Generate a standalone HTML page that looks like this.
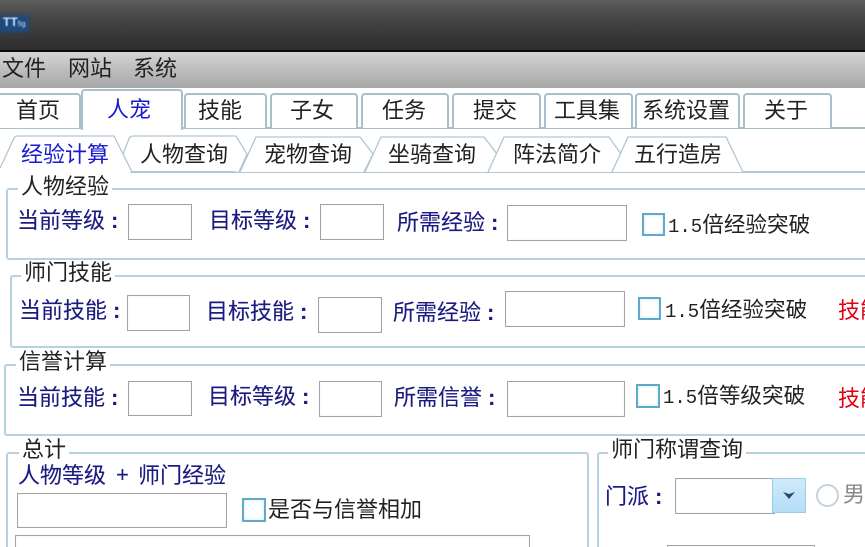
<!DOCTYPE html>
<html style="width:865px;height:547px;overflow:hidden"><head><meta charset="utf-8"><style>
html,body{margin:0;padding:0}
body{width:865px;height:547px;overflow:hidden;background:#fff;position:relative;font-family:"Liberation Sans","WenQuanYi Zen Hei","Noto Sans CJK SC",sans-serif;}
#p{left:0;top:0;width:865px;height:547px;overflow:hidden;background:#fff;filter:blur(.35px)}
div,span{position:absolute;box-sizing:border-box}
.t{font-size:22px;line-height:24px;white-space:nowrap;color:#222}
.t span{position:static}
.b{color:#1a1a80;-webkit-text-stroke:.12px #1a1a80}
.r{color:#e00010}
.k{font:bold 22px/24px "Liberation Sans",sans-serif;margin-left:6px}
.n{font:19px/24px "Liberation Mono",monospace}
.x{font-size:21.6px}
.i{background:#fff;border:1.5px solid #a3a3a3;box-shadow:inset 0 0 1px #ddd}
.c{background:#fff;border:2px solid #5fa9cc;box-shadow:inset 0 0 3px #cfe6f2}
.g{border:2px solid #b4d2e2;border-radius:3px}
.tab{border:2px solid #a9bfca;border-bottom:none;border-radius:4px 4px 0 0;background:#fff}
</style></head><body><div id="p">
<div style="left:0;top:0;width:865px;height:50px;background:linear-gradient(#5e5e5e,#464646 35%,#2c2c2c)"></div>
<div style="left:0;top:50px;width:865px;height:2px;background:#0c0c0c"></div>
<div style="left:0;top:15px;width:29px;height:17px;background:#1d4a80;filter:blur(1.5px)"></div>
<div style="left:3px;top:15px;font:bold 12px 'Liberation Sans';color:#cfe4f5;line-height:14px;filter:blur(.5px)">TT<span style="position:static;font-size:7px;font-weight:normal">5g</span></div>
<div style="left:0;top:52px;width:865px;height:36px;background:linear-gradient(#d4d4d4,#a6a6a6)"></div>
<div class="t" style="left:2px;top:57px">文件</div>
<div class="t" style="left:68px;top:57px">网站</div>
<div class="t" style="left:133px;top:57px">系统</div>

<div style="left:0;top:127px;width:865px;height:2px;background:#a9bfca"></div>
<div class="tab" style="left:-6px;top:93px;width:87px;height:35px"></div>
<div class="tab" style="left:270px;top:93px;width:88px;height:35px"></div>
<div class="tab" style="left:184px;top:93px;width:83px;height:35px"></div>
<div class="tab" style="left:361px;top:93px;width:88px;height:35px"></div>
<div class="tab" style="left:452px;top:93px;width:89px;height:35px"></div>
<div class="tab" style="left:544px;top:93px;width:89px;height:35px"></div>
<div class="tab" style="left:635px;top:93px;width:105px;height:35px"></div>
<div class="tab" style="left:743px;top:93px;width:89px;height:35px"></div>
<div class="tab" style="left:81px;top:89px;width:102px;height:41px"></div>
<div class="t" style="left:16px;top:99px">首页</div>
<div class="t" style="left:107px;top:98px;color:#1a1ad0">人宠</div>
<div class="t" style="left:198px;top:99px">技能</div>
<div class="t" style="left:290px;top:99px">子女</div>
<div class="t" style="left:382px;top:99px">任务</div>
<div class="t" style="left:473px;top:99px">提交</div>
<div class="t" style="left:554px;top:99px">工具集</div>
<div class="t" style="left:642px;top:99px">系统设置</div>
<div class="t" style="left:764px;top:99px">关于</div>

<svg style="position:absolute;left:0;top:130px" width="865" height="46" fill="#fff" stroke="#b3c6d0" stroke-width="1.3">
<path d="M130 42H865" stroke-width="2"/>
<path d="M0 38L2 34L14 8Q15 6 18 6H114L132 42" />
<path d="M123 24L129 9Q130 6 133 6H236L247 24L239 42" />
<path d="M240 42L256 7H360L373 24L364 42"/>
<path d="M365 42L381 7H484L497 24L488 42"/>
<path d="M488 42L504 7H609L621 24L612 42"/>
<path d="M612 42L628 7H726L743 42"/>
</svg>
<div class="t" style="left:21px;top:143px;color:#1a1ad0">经验计算</div>
<div class="t" style="left:140px;top:143px">人物查询</div>
<div class="t" style="left:264px;top:143px">宠物查询</div>
<div class="t" style="left:388px;top:143px">坐骑查询</div>
<div class="t" style="left:513px;top:143px">阵法简介</div>
<div class="t" style="left:634px;top:143px">五行造房</div>

<div class="g" style="left:6px;top:188px;width:880px;height:72px"></div>
<div class="g" style="left:10px;top:275px;width:880px;height:73px"></div>
<div class="g" style="left:4px;top:364px;width:880px;height:72px"></div>
<div class="g" style="left:6px;top:452px;width:583px;height:120px"></div>
<div class="g" style="left:597px;top:452px;width:300px;height:120px"></div>

<div class="t" style="left:18px;top:175px;background:#fff;padding:0 3px">人物经验</div>
<div class="t" style="left:21px;top:261px;background:#fff;padding:0 3px">师门技能</div>
<div class="t" style="left:16px;top:350px;background:#fff;padding:0 3px">信誉计算</div>
<div class="t" style="left:19px;top:438px;background:#fff;padding:0 3px">总计</div>
<div class="t" style="left:608px;top:438px;background:#fff;padding:0 3px">师门称谓查询</div>

<div class="t b" style="left:17px;top:209px">当前等级<span class="k">:</span></div>
<div class="i" style="left:128px;top:204px;width:64px;height:36px"></div>
<div class="t b" style="left:209px;top:209px">目标等级<span class="k">:</span></div>
<div class="i" style="left:320px;top:204px;width:64px;height:36px"></div>
<div class="t b" style="left:397px;top:211px">所需经验<span class="k">:</span></div>
<div class="i" style="left:507px;top:205px;width:120px;height:36px"></div>
<div class="c" style="left:642px;top:213px;width:23px;height:23px"></div>
<div class="t x" style="left:668px;top:213px"><span class="n">1.5</span>倍经验突破</div>

<div class="t b" style="left:19px;top:299px">当前技能<span class="k">:</span></div>
<div class="i" style="left:127px;top:295px;width:63px;height:36px"></div>
<div class="t b" style="left:206px;top:300px">目标技能<span class="k">:</span></div>
<div class="i" style="left:318px;top:297px;width:64px;height:36px"></div>
<div class="t b" style="left:393px;top:301px">所需经验<span class="k">:</span></div>
<div class="i" style="left:505px;top:291px;width:120px;height:36px"></div>
<div class="c" style="left:638px;top:297px;width:23px;height:23px"></div>
<div class="t x" style="left:665px;top:298px"><span class="n">1.5</span>倍经验突破</div>
<div class="t r" style="left:838px;top:299px">技能</div>

<div class="t b" style="left:17px;top:386px">当前技能<span class="k">:</span></div>
<div class="i" style="left:128px;top:381px;width:64px;height:35px"></div>
<div class="t b" style="left:208px;top:385px">目标等级<span class="k">:</span></div>
<div class="i" style="left:319px;top:381px;width:63px;height:36px"></div>
<div class="t b" style="left:394px;top:386px">所需信誉<span class="k">:</span></div>
<div class="i" style="left:507px;top:381px;width:118px;height:36px"></div>
<div class="c" style="left:636px;top:384px;width:24px;height:24px"></div>
<div class="t x" style="left:663px;top:384px"><span class="n">1.5</span>倍等级突破</div>
<div class="t r" style="left:838px;top:387px">技能</div>

<div class="t b" style="left:18px;top:464px">人物等级</div>
<div class="t b" style="left:116px;top:463px;font-family:'Liberation Sans',sans-serif">+</div>
<div class="t b" style="left:138px;top:464px">师门经验</div>
<div class="i" style="left:17px;top:493px;width:210px;height:35px"></div>
<div class="c" style="left:242px;top:498px;width:24px;height:24px"></div>
<div class="t" style="left:268px;top:498px">是否与信誉相加</div>
<div class="i" style="left:15px;top:535px;width:515px;height:30px"></div>

<div class="t b" style="left:605px;top:485px">门派<span class="k">:</span></div>
<div class="i" style="left:675px;top:478px;width:100px;height:36px"></div>
<div style="left:772px;top:478px;width:34px;height:35px;background:linear-gradient(#cfeaf9,#b4def7);border:1.5px solid #9ccde8"></div>
<svg style="position:absolute;left:782px;top:491px" width="14" height="9"><path d="M1 1L7 3L13 1L7 8Z" fill="#2c4a70"/></svg>
<div style="left:816px;top:484px;width:23px;height:23px;border-radius:50%;border:2px solid #c5d2dc;background:#fff"></div>
<div class="t" style="left:843px;top:483px;color:#888">男</div>
<div class="i" style="left:667px;top:545px;width:148px;height:10px"></div>
</div></body></html>
